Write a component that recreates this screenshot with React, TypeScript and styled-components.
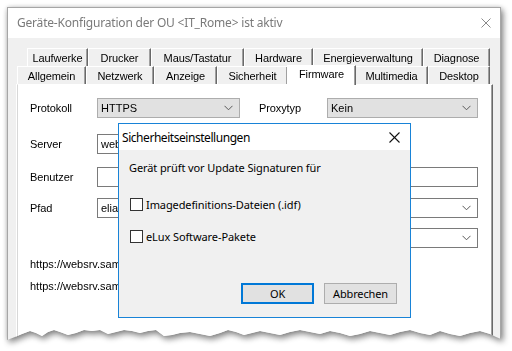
import React from "react";
import styled, { createGlobalStyle } from "styled-components";

const GlobalStyle = createGlobalStyle`
  html, body { margin: 0; padding: 0; background: #ffffff; }
  body { font-family: "Liberation Sans", Arial, sans-serif; }
  * { box-sizing: border-box; }
`;

const UI = `"Noto Sans", "Open Sans", sans-serif`;
const SS = `"Liberation Sans", Arial, sans-serif`;

const Stage = styled.div`
  position: relative;
  width: 512px;
  height: 351px;
  padding: 7px 0 0 7px;
  overflow: hidden;
  background: #ffffff;
`;

const ShadowWrap = styled.div`
  width: 494px;
  filter: drop-shadow(2px 3px 3px rgba(0, 0, 0, 0.45)) drop-shadow(0 0 2px rgba(0, 0, 0, 0.15));
`;

const torn: [number, number][] = [
  [7, 340], [15, 337], [22, 334], [30, 331], [36, 333], [42, 336], [48, 332], [54, 330],
  [60, 332], [68, 335], [76, 333], [84, 330], [92, 331], [100, 330], [108, 334], [116, 332],
  [124, 330], [132, 331], [140, 333], [148, 331], [156, 330], [164, 336], [172, 335],
  [180, 333], [190, 332], [200, 334], [210, 336], [220, 333], [228, 330], [236, 332],
  [244, 335], [252, 333], [260, 331], [270, 333], [280, 335], [290, 332], [300, 330],
  [310, 332], [320, 334], [330, 331], [340, 333], [350, 336], [360, 334], [370, 331],
  [380, 333], [390, 335], [400, 332], [410, 330], [420, 333], [430, 335], [440, 331],
  [450, 334], [460, 336], [470, 333], [480, 331], [490, 334], [496, 337], [501, 339],
];
const clip =
  "polygon(0px 0px, 100% 0px, " +
  torn
    .slice()
    .reverse()
    .map(([x, y]) => `${x - 7}px ${y - 7}px`)
    .join(", ") +
  ")";

const Window = styled.div<{ $clip: string }>`
  width: 494px;
  height: 340px;
  border: 1px solid #a6a6a6;
  background: #f0f0f0;
  display: flex;
  flex-direction: column;
  clip-path: ${(p) => p.$clip};
`;

const TitleBar = styled.div`
  height: 30px;
  background: #ffffff;
  display: flex;
  align-items: center;
  justify-content: space-between;
  padding: 0 9px 0 9px;
  font-family: ${UI};
  font-size: 12px;
  color: #7a7a7a;
`;

const TitleText = styled.span`
  letter-spacing: -0.2px;
  margin-top: -1px;
`;

const Body = styled.div`
  flex: 1;
  display: flex;
  flex-direction: column;
  padding: 10px 7px 0 9px;
`;

const TabRow = styled.div<{ $indent: number }>`
  display: flex;
  height: 18px;
  padding-left: ${(p) => p.$indent}px;
  align-items: flex-end;
`;

const Tab = styled.div<{ $w: number; $active?: boolean }>`
  width: ${(p) => p.$w}px;
  height: ${(p) => (p.$active ? 20 : 18)}px;
  margin: ${(p) => (p.$active ? "0 -1px -1px -1px" : "0")};
  position: relative;
  z-index: ${(p) => (p.$active ? 2 : 1)};
  background: ${(p) => (p.$active ? "#ffffff" : "#f0f0f0")};
  border-left: 1px solid #ffffff;
  border-top: 1px solid #ffffff;
  border-right: 1px solid #696969;
  box-shadow: inset -1px 0 0 #a0a0a0;
  display: flex;
  align-items: center;
  justify-content: center;
  font-family: ${SS};
  font-size: 11px;
  color: #000;
  padding-bottom: ${(p) => (p.$active ? 3 : 0)}px;
  letter-spacing: -0.1px;
`;

const Panel = styled.div`
  flex: 1;
  background: #ffffff;
  border-left: 1px solid #d8d8d8;
  border-top: 1px solid #ffffff;
  border-right: 1px solid #696969;
  box-shadow: inset -1px 0 0 #a0a0a0, -1px 0 0 #ffffff;
  padding: 13px 0 0 12px;
  display: flex;
  flex-direction: column;
  font-family: ${SS};
  font-size: 11px;
  color: #000;
`;

const Row = styled.div<{ $mt: number }>`
  display: flex;
  align-items: center;
  height: 20px;
  margin-top: ${(p) => p.$mt}px;
`;

const Label = styled.div<{ $w: number; $ml?: number }>`
  width: ${(p) => p.$w}px;
  margin-left: ${(p) => p.$ml ?? 0}px;
  flex: none;
  letter-spacing: -0.1px;
`;

const Field = styled.div<{ $w: number; $kind: "combo" | "edit" | "text" }>`
  width: ${(p) => p.$w}px;
  height: 20px;
  flex: none;
  border: 1px solid ${(p) => (p.$kind === "combo" ? "#adadad" : "#7a7a7a")};
  background: ${(p) => (p.$kind === "combo" ? "#e1e1e1" : "#ffffff")};
  display: flex;
  align-items: center;
  justify-content: space-between;
  padding: 0 6px 0 3px;
  white-space: nowrap;
  overflow: hidden;
`;

const UrlLine = styled.div<{ $mt?: number }>`
  height: 22px;
  line-height: 22px;
  margin-top: ${(p) => p.$mt ?? 0}px;
  white-space: nowrap;
`;

const Chevron = () => (
  <svg width="9" height="6" viewBox="0 0 9 6" style={{ flex: "none" }}>
    <polyline points="0.5,0.8 4.5,4.8 8.5,0.8" fill="none" stroke="#5a5a5a" strokeWidth="1" />
  </svg>
);

const CloseX = ({ color, size, width }: { color: string; size: number; width: number }) => (
  <svg width={size} height={size} viewBox={`0 0 ${size} ${size}`}>
    <line x1="0.5" y1="0.5" x2={size - 0.5} y2={size - 0.5} stroke={color} strokeWidth={width} />
    <line x1={size - 0.5} y1="0.5" x2="0.5" y2={size - 0.5} stroke={color} strokeWidth={width} />
  </svg>
);

const Dialog = styled.div`
  position: absolute;
  left: 118px;
  top: 123px;
  width: 293px;
  height: 195px;
  border: 1px solid #1883d7;
  background: #f0f0f0;
  display: flex;
  flex-direction: column;
  font-family: ${UI};
  font-size: 11px;
  color: #000;
`;

const DialogTitle = styled.div`
  height: 26px;
  background: #ffffff;
  display: flex;
  align-items: center;
  justify-content: space-between;
  padding: 0 10px 0 3px;
  font-size: 12px;
`;

const DialogTitleText = styled.span`
  letter-spacing: -0.45px;
`;

const DialogBody = styled.div`
  flex: 1;
  display: flex;
  flex-direction: column;
  padding: 10px 13px 13px 10px;
`;

const Message = styled.div`
  height: 16px;
  line-height: 16px;
  letter-spacing: -0.1px;
`;

const CheckRow = styled.label<{ $mt: number }>`
  display: flex;
  align-items: center;
  height: 16px;
  margin-top: ${(p) => p.$mt}px;
  padding-left: 1px;
  gap: 3px;
  letter-spacing: -0.1px;
`;

const Box = styled.span`
  width: 13px;
  height: 13px;
  border: 1px solid #333333;
  background: #ffffff;
  flex: none;
`;

const ButtonRow = styled.div`
  margin-top: auto;
  display: flex;
  justify-content: flex-end;
  gap: 10px;
`;

const Button = styled.div<{ $default?: boolean; $w: number }>`
  width: ${(p) => p.$w}px;
  height: 21px;
  background: #e1e1e1;
  border: ${(p) => (p.$default ? "2px solid #0078d7" : "1px solid #adadad")};
  display: flex;
  align-items: center;
  justify-content: center;
  font-size: 11px;
  letter-spacing: -0.15px;
`;

export default function App() {
  return (
    <>
      <GlobalStyle />
      <Stage>
        <ShadowWrap>
          <Window $clip={clip}>
            <TitleBar>
              <TitleText>Geräte-Konfiguration der OU &lt;IT_Rome&gt; ist aktiv</TitleText>
              <CloseX color="#8a8a8a" size={10} width={1} />
            </TitleBar>
            <Body>
              <TabRow $indent={10}>
                <Tab $w={61}>Laufwerke</Tab>
                <Tab $w={63}>Drucker</Tab>
                <Tab $w={93}>Maus/Tastatur</Tab>
                <Tab $w={69}>Hardware</Tab>
                <Tab $w={110}>Energieverwaltung</Tab>
                <Tab $w={67}>Diagnose</Tab>
              </TabRow>
              <TabRow $indent={0}>
                <Tab $w={69}>Allgemein</Tab>
                <Tab $w={68}>Netzwerk</Tab>
                <Tab $w={63}>Anzeige</Tab>
                <Tab $w={71}>Sicherheit</Tab>
                <Tab $w={69} $active>Firmware</Tab>
                <Tab $w={73}>Multimedia</Tab>
                <Tab $w={62}>Desktop</Tab>
              </TabRow>
              <Panel>
                <Row $mt={0}>
                  <Label $w={67}>Protokoll</Label>
                  <Field $w={143} $kind="combo">
                    <span>HTTPS</span>
                    <Chevron />
                  </Field>
                  <Label $w={68} $ml={19}>Proxytyp</Label>
                  <Field $w={151} $kind="combo">
                    <span>Kein</span>
                    <Chevron />
                  </Field>
                </Row>
                <Row $mt={16}>
                  <Label $w={67}>Server</Label>
                  <Field $w={210} $kind="text">web</Field>
                </Row>
                <Row $mt={13}>
                  <Label $w={67}>Benutzer</Label>
                  <Field $w={381} $kind="text" />
                </Row>
                <Row $mt={11}>
                  <Label $w={67}>Pfad</Label>
                  <Field $w={381} $kind="edit">
                    <span>elias</span>
                    <Chevron />
                  </Field>
                </Row>
                <Row $mt={10}>
                  <Label $w={120} />
                  <Field $w={328} $kind="edit">
                    <span />
                    <Chevron />
                  </Field>
                </Row>
                <UrlLine $mt={5}>https://websrv.sample.com/eluxng/UC_RP6/</UrlLine>
                <UrlLine>https://websrv.sample.com/eluxng/UC_RP6/pkg</UrlLine>
              </Panel>
            </Body>
          </Window>
        </ShadowWrap>
        <Dialog>
          <DialogTitle>
            <DialogTitleText>Sicherheitseinstellungen</DialogTitleText>
            <CloseX color="#111111" size={11} width={1.1} />
          </DialogTitle>
          <DialogBody>
            <Message>Gerät prüft vor Update Signaturen für</Message>
            <CheckRow $mt={20}>
              <Box />
              <span>Imagedefinitions-Dateien (.idf)</span>
            </CheckRow>
            <CheckRow $mt={16}>
              <Box />
              <span>eLux Software-Pakete</span>
            </CheckRow>
            <ButtonRow>
              <Button $default $w={73}>OK</Button>
              <Button $w={73}>Abbrechen</Button>
            </ButtonRow>
          </DialogBody>
        </Dialog>
      </Stage>
    </>
  );
}
